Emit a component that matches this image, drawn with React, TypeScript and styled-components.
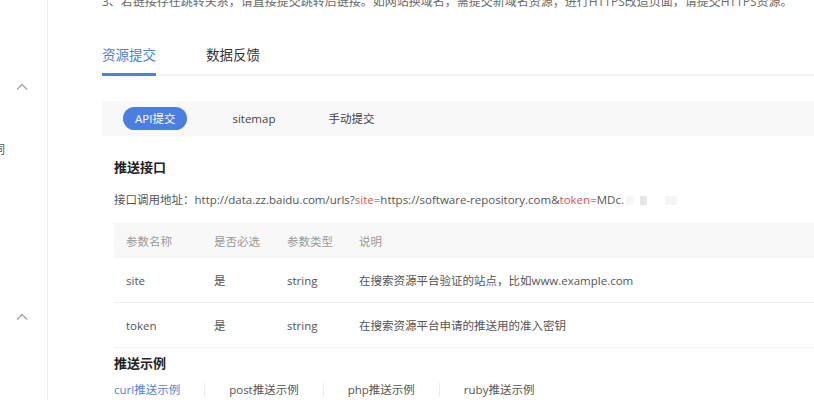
import React from "react";
import styled, { createGlobalStyle } from "styled-components";

const GlobalStyle = createGlobalStyle`
  html, body { margin: 0; padding: 0; background: #fff; overflow: hidden; }
  body { font-family: "Open Sans", "Noto Sans CJK SC", sans-serif; color: #555; }
`;

const Page = styled.div`
  display: flex;
  width: 814px;
  height: 400px;
  overflow: hidden;
`;

const Sidebar = styled.aside`
  flex: 0 0 48px;
  border-right: 1px solid #efefef;
  display: flex;
  flex-direction: column;
  padding-top: 67px;
  box-sizing: border-box;
  overflow: hidden;
`;

const GroupHeader = styled.div<{ $gap?: number }>`
  height: 40px;
  margin-top: ${(p) => p.$gap ?? 0}px;
  display: flex;
  align-items: center;
  justify-content: center;
  padding-right: 4px;
  color: #a0a0a0;
`;

const MenuItem = styled.div`
  height: 40px;
  margin-top: 23px;
  line-height: 40px;
  font-size: 12px;
  color: #555;
  margin-left: -7px;
  white-space: nowrap;
`;

const Main = styled.main`
  flex: 1;
  min-width: 0;
  padding-left: 54px;
  display: flex;
  flex-direction: column;
  overflow: hidden;
`;

const TopNote = styled.p`
  margin: -8px 0 0;
  font-size: 12px;
  line-height: 20px;
  color: #6a6a6a;
  white-space: nowrap;
`;

const TabBar = styled.div`
  margin-top: 32px;
  display: flex;
  gap: 50px;
  border-bottom: 2px solid #f4f4f4;
`;

const Tab = styled.div<{ $active?: boolean }>`
  font-size: 13.5px;
  line-height: 22px;
  padding-bottom: 7px;
  margin-bottom: -2px;
  border-bottom: 3px solid ${(p) => (p.$active ? "#4e7fdc" : "transparent")};
  color: ${(p) => (p.$active ? "#4e7fdc" : "#333")};
`;

const SubTabBar = styled.div`
  margin-top: 25px;
  height: 35px;
  background: #f8f8f8;
  display: flex;
  align-items: center;
  padding-left: 21px;
`;

const SubTab = styled.div<{ $active?: boolean; $w: number }>`
  width: ${(p) => p.$w}px;
  font-size: 11.5px;
  line-height: 23px;
  color: #444;
  ${(p) =>
    p.$active
      ? `
    width: auto;
    background: #4a7ee3;
    color: #fff;
    border-radius: 12px;
    padding: 0 12px;
    margin-right: 45px;
  `
      : ""}
`;

const Section = styled.section`
  padding-left: 12px;
  display: flex;
  flex-direction: column;
`;

const Title = styled.h3<{ $mt: number }>`
  margin: ${(p) => p.$mt}px 0 0;
  font-size: 13px;
  line-height: 20px;
  font-weight: 700;
  color: #222;
`;

const UrlLine = styled.div`
  margin-top: 13px;
  font-size: 11.5px;
  line-height: 20px;
  color: #555;
  white-space: nowrap;
  display: flex;
  align-items: center;
`;

const Param = styled.span`
  color: #e5534b;
`;

const Redacted = styled.span<{ $w: number; $ml: number; $c: string }>`
  display: inline-block;
  width: ${(p) => p.$w}px;
  height: 9px;
  margin-left: ${(p) => p.$ml}px;
  background: ${(p) => p.$c};
`;

const Table = styled.div`
  margin-top: 13px;
  display: flex;
  flex-direction: column;
`;

const Row = styled.div<{ $head?: boolean }>`
  display: grid;
  grid-template-columns: 88px 73px 72px 1fr;
  align-items: center;
  padding-left: 12px;
  font-size: 11.5px;
  height: ${(p) => (p.$head ? 35 : 44)}px;
  background: ${(p) => (p.$head ? "#f8f8f8" : "transparent")};
  color: ${(p) => (p.$head ? "#9a9a9a" : "#555")};
  border-bottom: ${(p) => (p.$head ? "none" : "1px solid #f0f0f0")};
  white-space: nowrap;
`;

const ExampleTabs = styled.div`
  margin-top: 7px;
  display: flex;
  align-items: center;
`;

const ExampleTab = styled.div<{ $active?: boolean; $first?: boolean; $last?: boolean }>`
  font-size: 11.5px;
  line-height: 20px;
  color: ${(p) => (p.$active ? "#4e7fdc" : "#555")};
  padding-left: ${(p) => (p.$first ? 0 : 24)}px;
  padding-right: 25px;
  position: relative;
  white-space: nowrap;
  ${(p) =>
    p.$last
      ? ""
      : `
    &::after {
      content: "";
      position: absolute;
      right: 0;
      top: 3px;
      height: 14px;
      width: 1px;
      background: #ececec;
    }
  `}
`;

const Chevron = () => (
  <svg width="12" height="8" viewBox="0 0 12 8" fill="none">
    <path d="M1 6.5 L6 1.5 L11 6.5" stroke="#a3a3a3" strokeWidth="1.3" />
  </svg>
);

const rows = [
  { name: "site", req: "是", type: "string", desc: "在搜索资源平台验证的站点，比如www.example.com" },
  { name: "token", req: "是", type: "string", desc: "在搜索资源平台申请的推送用的准入密钥" },
];

export default function App() {
  return (
    <>
      <GlobalStyle />
      <Page>
        <Sidebar>
          <GroupHeader>
            <Chevron />
          </GroupHeader>
          <MenuItem>词</MenuItem>
          <GroupHeader $gap={127}>
            <Chevron />
          </GroupHeader>
        </Sidebar>
        <Main>
          <TopNote>
            3、若链接存在跳转关系，请直接提交跳转后链接。如网站换域名，需提交新域名资源；进行HTTPS改造页面，请提交HTTPS资源。
          </TopNote>
          <TabBar>
            <Tab $active>资源提交</Tab>
            <Tab>数据反馈</Tab>
          </TabBar>
          <SubTabBar>
            <SubTab $active $w={0}>API提交</SubTab>
            <SubTab $w={96}>sitemap</SubTab>
            <SubTab $w={80}>手动提交</SubTab>
          </SubTabBar>
          <Section>
            <Title $mt={21}>推送接口</Title>
            <UrlLine>
              接口调用地址：http://data.zz.baidu.com/urls?<Param>site</Param>=https://software-repository.com&amp;
              <Param>token</Param>=MDc.
              <Redacted $w={8} $ml={2} $c="#f6f6f6" />
              <Redacted $w={7} $ml={6} $c="#e6e6e6" />
              <Redacted $w={12} $ml={18} $c="#f5f5f5" />
            </UrlLine>
            <Table>
              <Row $head>
                <span>参数名称</span>
                <span>是否必选</span>
                <span>参数类型</span>
                <span>说明</span>
              </Row>
              {rows.map((r) => (
                <Row key={r.name}>
                  <span>{r.name}</span>
                  <span>{r.req}</span>
                  <span>{r.type}</span>
                  <span>{r.desc}</span>
                </Row>
              ))}
            </Table>
            <Title $mt={5}>推送示例</Title>
            <ExampleTabs>
              <ExampleTab $active $first>curl推送示例</ExampleTab>
              <ExampleTab>post推送示例</ExampleTab>
              <ExampleTab>php推送示例</ExampleTab>
              <ExampleTab $last>ruby推送示例</ExampleTab>
            </ExampleTabs>
          </Section>
        </Main>
      </Page>
    </>
  );
}
